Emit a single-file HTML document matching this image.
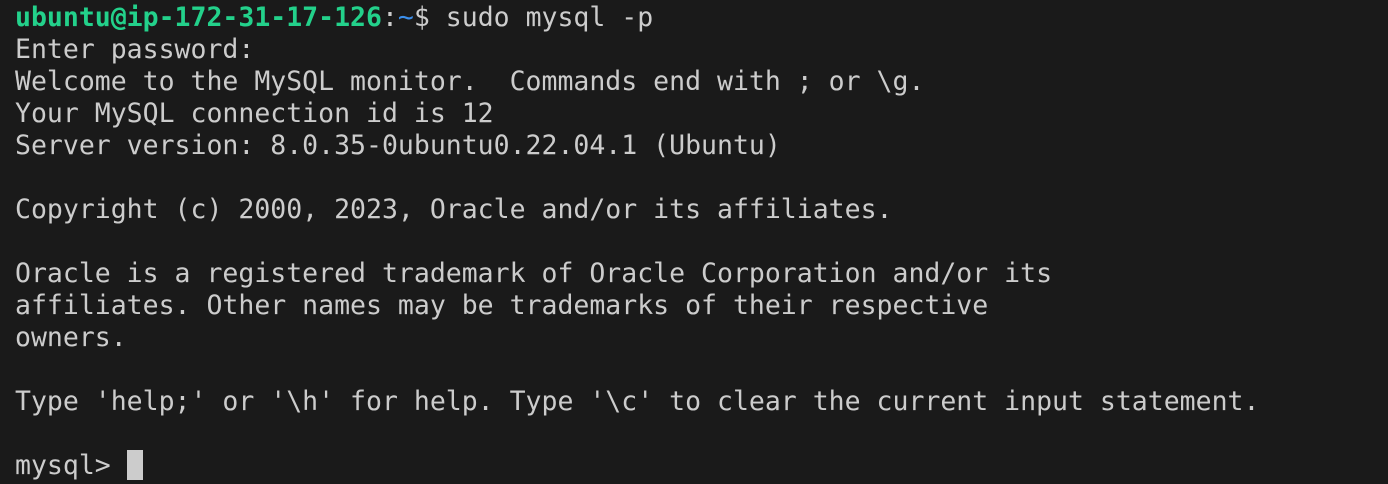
<!DOCTYPE html>
<html><head><meta charset="utf-8"><style>
html,body{margin:0;padding:0;background:#1a1a1a;width:1388px;height:484px;overflow:hidden}
pre{margin:0;position:absolute;left:15px;top:2px;font-family:"DejaVu Sans Mono","Liberation Mono",monospace;font-size:26.5px;line-height:32px;color:#cccccc;white-space:pre}
.g{color:#23d18b;font-weight:bold}.b{color:#3b8eea}
.c{display:inline-block;width:16px;height:30px;background:#cccccc;vertical-align:-6px}
</style></head><body><pre><span class="g">ubuntu@ip-172-31-17-126</span>:<span class="b">~</span>$ sudo mysql -p
Enter password:
Welcome to the MySQL monitor.  Commands end with ; or \g.
Your MySQL connection id is 12
Server version: 8.0.35-0ubuntu0.22.04.1 (Ubuntu)

Copyright (c) 2000, 2023, Oracle and/or its affiliates.

Oracle is a registered trademark of Oracle Corporation and/or its
affiliates. Other names may be trademarks of their respective
owners.

Type 'help;' or '\h' for help. Type '\c' to clear the current input statement.

mysql&gt; <span class="c"></span></pre></body></html>
